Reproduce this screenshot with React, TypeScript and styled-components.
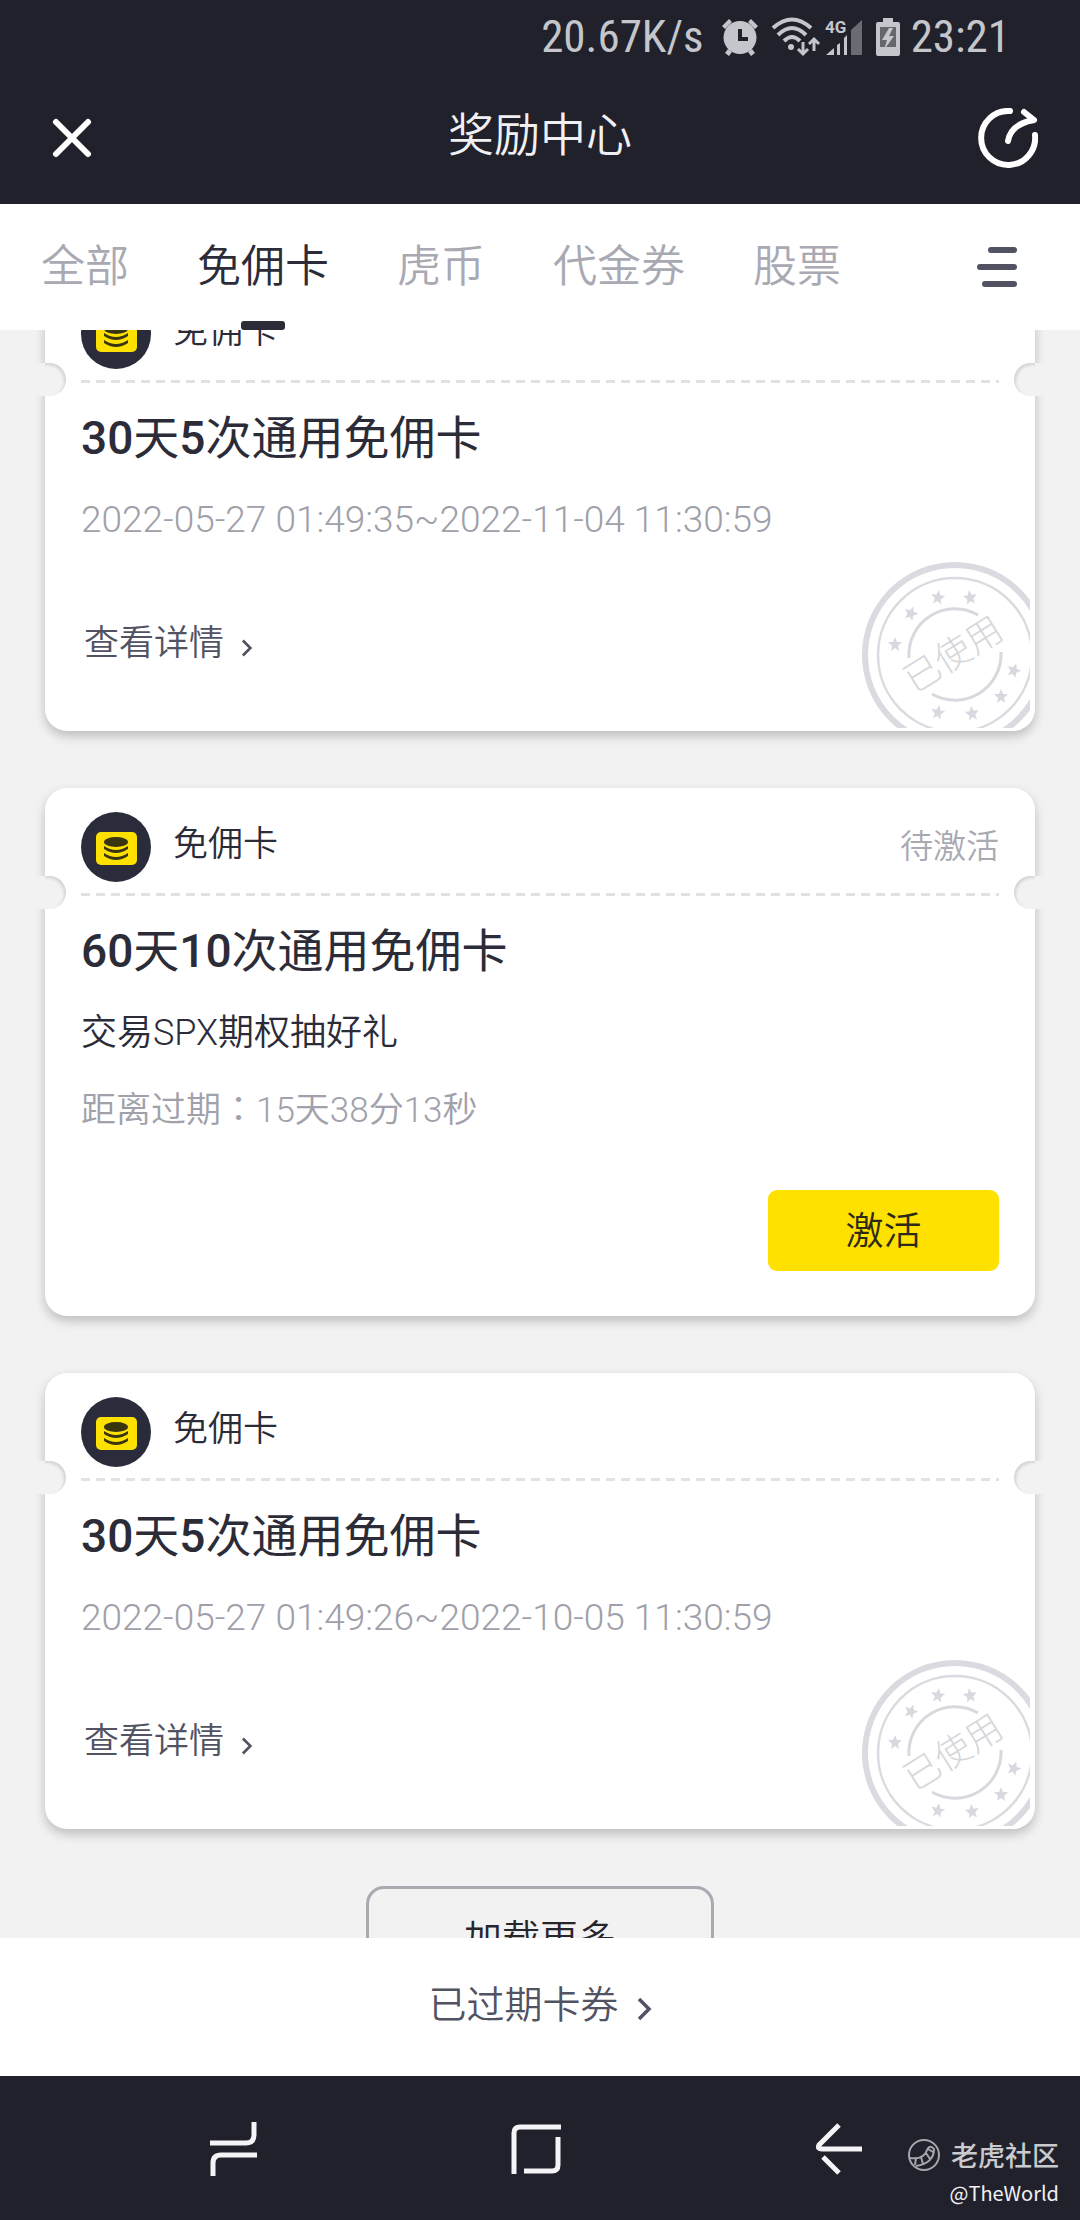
import React, { useLayoutEffect, useRef, useState } from "react";
import styled, { createGlobalStyle } from "styled-components";

const ink = "#2b2c38";
const slate = "#515262";
const muted = "#a8a9b2";
const bar = "#21212b";
const cjk = `Roboto, "Noto Sans CJK SC", sans-serif`;

const GlobalStyle = createGlobalStyle`
  *, *::before, *::after { box-sizing: border-box; }
  body { margin: 0; background: #f2f2f2; font-family: ${cjk}; font-weight: 350; color: ${ink}; }
  button { margin: 0; padding: 0; border: 0; background: none; font: inherit; color: inherit; cursor: pointer; }
  a { color: inherit; text-decoration: none; }
  h1, h2, p { margin: 0; font-weight: inherit; }
  svg { display: block; flex: none; }
`;

const Screen = styled.div`
  display: flex;
  flex-direction: column;
  height: 100vh;
  overflow: hidden;
`;

const StatusBar = styled.div`
  display: flex;
  flex: none;
  align-items: center;
  justify-content: flex-end;
  height: 72px;
  padding: 2px 70px 0 40px;
  background: ${bar};
  color: #c5c6cb;
  font-family: "Roboto Condensed", "Liberation Sans Narrow", Roboto, sans-serif;
  font-size: 45px;
  font-weight: 400;
  line-height: 70px;
`;

const StatusIcons = styled.div`
  display: flex;
  align-items: center;
  gap: 12px;
  padding: 0 10px 0 17px;
`;

const NetworkIcons = styled.div`
  display: flex;
  align-items: center;
  gap: 4px;
`;

const Header = styled.header`
  display: grid;
  flex: none;
  grid-template-columns: 60px 1fr 60px;
  align-items: center;
  height: 132px;
  padding: 0 42px;
  background: ${bar};
  color: #fff;
`;

const Title = styled.h1`
  padding-bottom: 6px;
  color: #f0f0f4;
  font-size: 46px;
  line-height: 64px;
  text-align: center;
`;

const IconButton = styled.button`
  display: flex;
  align-items: center;
  justify-content: center;
  height: 60px;
`;

const TabBar = styled.nav`
  display: flex;
  flex: none;
  align-items: stretch;
  justify-content: space-between;
  height: 126px;
  padding: 0 62px 0 41px;
  background: #fff;
`;

const TabList = styled.div`
  display: flex;
  gap: 68px;
`;

const Tab = styled.button<{ $active: boolean }>`
  position: relative;
  color: ${(p) => (p.$active ? ink : muted)};
  font-size: 44px;
  line-height: 64px;
  white-space: nowrap;

  &::after {
    content: "";
    position: absolute;
    bottom: 0;
    left: calc(50% - 22px);
    width: 44px;
    height: 9px;
    border-radius: 3px;
    background: ${(p) => (p.$active ? ink : "transparent")};
  }
`;

const List = styled.main`
  flex: 1;
  min-height: 0;
  overflow-y: auto;
  scrollbar-width: none;
`;

const ListInner = styled.div`
  display: flex;
  flex-direction: column;
  gap: 57px;
  padding: 40px 45px 60px;
`;

const Card = styled.article`
  position: relative;
  flex: none;
  border-radius: 22px;
  background: #fff;
  box-shadow: 0 5px 11px rgba(0, 0, 0, 0.22);
`;

const Notch = styled.span<{ $side: "left" | "right" }>`
  position: absolute;
  top: 88px;
  ${(p) => p.$side}: -12px;
  width: 33px;
  height: 33px;
  border-radius: ${(p) => (p.$side === "left" ? "0 17px 17px 0" : "17px 0 0 17px")};
  background: #f2f2f2;

  &::after {
    content: "";
    position: absolute;
    inset: 0;
    border-radius: inherit;
    box-shadow: inset ${(p) => (p.$side === "left" ? "-2px" : "2px")} 2px 3px rgba(0, 0, 0, 0.12);
    clip-path: ${(p) => (p.$side === "left" ? "inset(0 0 0 12px)" : "inset(0 12px 0 0)")};
  }
`;

const CardHead = styled.div`
  display: flex;
  align-items: center;
  gap: 22px;
  padding: 24px 36px 11px;
`;

const Kind = styled.span`
  flex: 1;
  padding-bottom: 4px;
  font-size: 35px;
  line-height: 56px;
`;

const Status = styled.span`
  color: ${muted};
  font-size: 33px;
  line-height: 56px;
`;

const Perforation = styled.div`
  height: 3px;
  margin: 0 36px;
  background: repeating-linear-gradient(90deg, #e2e2e4 0 9px, transparent 9px 15px);
`;

const CardBody = styled.div`
  display: flex;
  flex-direction: column;
  gap: 22px;
  padding: 23px 36px 0;
`;

const CardTitle = styled.h2`
  font-size: 46px;
  font-weight: 400;
  line-height: 64px;
`;

const Figure = styled.span`
  font-weight: 500;
`;

const Line = styled.p`
  font-size: 36px;
  line-height: 56px;
`;

const Range = styled(Line)`
  color: #9fa0a9;
  font-size: 37px;
  font-weight: 300;
`;

const Expiry = styled(Line)`
  color: #a0a1aa;
  font-size: 35px;
`;

const CentredColon = styled.span`
  font-family: "Noto Sans CJK TC", sans-serif;
  line-height: 1;
`;

const DetailRow = styled.div`
  padding: 68px 39px 59px;
`;

const DetailLink = styled.a`
  display: flex;
  align-items: center;
  gap: 17px;
  width: fit-content;
  color: ${slate};
  font-size: 35px;
  line-height: 56px;
`;

const ActionRow = styled.div`
  display: flex;
  justify-content: flex-end;
  padding: 51px 36px 45px;
`;

const Activate = styled.button`
  width: 231px;
  height: 81px;
  padding-bottom: 6px;
  border-radius: 9px;
  background: #ffe100;
  color: #2e2a18;
  font-size: 38px;
`;

const StampBox = styled.div`
  position: absolute;
  right: 5px;
  bottom: 3px;
`;

const StampText = styled.text`
  fill: #d6d7db;
  font-family: "Noto Sans CJK SC", sans-serif;
  font-size: 36px;
  font-weight: 300;
`;

const LoadMore = styled.button`
  align-self: center;
  width: 348px;
  height: 104px;
  padding-bottom: 6px;
  border: 3px solid #a9a9b2;
  border-radius: 18px;
  color: #26262c;
  font-size: 38px;
`;

const Footer = styled.footer`
  display: flex;
  flex: none;
  align-items: center;
  justify-content: center;
  height: 138px;
  padding-bottom: 4px;
  background: #fff;
`;

const ExpiredLink = styled.a`
  display: flex;
  align-items: center;
  gap: 18px;
  color: ${slate};
  font-size: 38px;
  line-height: 60px;
`;

const ChevronSvg = styled.svg`
  margin-top: 8px;
`;

const SystemNav = styled.nav`
  position: relative;
  display: grid;
  flex: none;
  grid-template-columns: repeat(3, 1fr);
  align-items: center;
  height: 144px;
  padding: 2px 90px 0 83px;
  background: ${bar};
`;

const Watermark = styled.div`
  position: absolute;
  right: 21px;
  bottom: 9px;
  display: flex;
  flex-direction: column;
  align-items: flex-end;
  font-family: "Noto Sans CJK SC", sans-serif;
`;

const Brand = styled.div`
  display: flex;
  align-items: center;
  gap: 10px;
  color: #c9c9ce;
  font-size: 27px;
  font-weight: 500;
  line-height: 40px;
`;

const Author = styled.div`
  color: #f0f0f2;
  font-size: 20px;
  font-weight: 400;
  line-height: 36px;
`;

const AlarmIcon = () => (
  <svg width="38" height="38" viewBox="0 0 38 38" fill="currentColor" aria-hidden="true">
    <path d="M1 8 8 1l3 3-7 7zM37 8l-7-7-3 3 7 7z" />
    <path d="M7 31l4 3-3 4-4-3zM31 31l-4 3 3 4 4-3z" />
    <path fillRule="evenodd" d="M19 3a16.500 16.500 0 1 0 0 33 16.500 16.500 0 0 0 0-33zm-2 8h4v8h6v4H17z" />
  </svg>
);

const WifiIcon = () => (
  <svg width="50" height="40" viewBox="0 0 50 40" fill="none" stroke="currentColor" aria-hidden="true">
    <g strokeWidth="4">
      <path d="M2 11Q21-6 40 11" />
      <path d="M7 18Q21 4 35 18" />
      <path d="M13 24Q21 16 29 24" />
    </g>
    <circle cx="20" cy="30" r="3" fill="currentColor" stroke="none" />
    <path strokeWidth="3" d="M32 25v12M27 32l5 5 5-5M43 34V22M38 27l5-5 5 5" />
  </svg>
);

const SignalIcon = () => (
  <svg width="38" height="38" viewBox="0 0 38 38" fill="currentColor" aria-hidden="true">
    <path opacity=".45" d="M26 37V12L37 2v35z" />
    <path d="M1 37l8-7v7zM12 37v-10l3-2v12zM19 37V20l3-3v20z" />
    <text x="0" y="15" fontFamily="Roboto, sans-serif" fontSize="17" fontWeight="700">4G</text>
  </svg>
);

const BatteryIcon = () => (
  <svg width="26" height="40" viewBox="0 0 26 40" aria-hidden="true">
    <path fill="currentColor" d="M8 1h10v4h5q2 0 2 2v30q0 2-2 2H3q-2 0-2-2V7q0-2 2-2h5z" />
    <path fill="#66666d" d="M5 10h16v20H5z" />
    <path fill="currentColor" d="M14 11 7 23h5L9 33l10-14h-5l4-8z" />
  </svg>
);

const CloseIcon = () => (
  <svg width="44" height="44" viewBox="0 0 44 44" fill="none" stroke="#fff" strokeWidth="6" strokeLinecap="round" aria-hidden="true">
    <path d="M6 6l32 32M38 6 6 38" />
  </svg>
);

const ShareIcon = () => (
  <svg width="60" height="60" viewBox="0 0 60 60" fill="none" stroke="#fff" strokeWidth="6" strokeLinecap="round" strokeLinejoin="round" aria-hidden="true">
    <path d="M32 3A27 27 0 1 0 57 27" />
    <path d="M30 33Q33 16 56 12M46 4l10 8" />
  </svg>
);

const FilterIcon = () => (
  <svg width="42" height="42" viewBox="0 0 42 42" stroke={slate} strokeWidth="6" strokeLinecap="round" aria-hidden="true">
    <path d="M15 4h23M4 21h34M9 38h29" />
  </svg>
);

const CoinIcon = () => (
  <svg width="70" height="70" viewBox="0 0 70 70" aria-hidden="true">
    <circle cx="35" cy="35" r="35" fill="#2b2c3b" />
    <rect x="15" y="20" width="41" height="33" rx="5" fill="#ffe100" />
    <ellipse cx="35" cy="30" rx="12" ry="5" fill="#38350f" />
    <path d="M23 34q12 8 24 0v3q-12 8-24 0zM23 41q12 8 24 0v3q-12 8-24 0z" fill="#38350f" />
  </svg>
);

const Chevron = ({ size }: { size: number }) => (
  <ChevronSvg width={size / 2 + 3} height={size} viewBox="0 0 15 24" fill="none" stroke="currentColor" strokeWidth="3.500" aria-hidden="true">
    <path d="M2 2l10 10L2 22" />
  </ChevronSvg>
);

const starSpots = [
  [76, 35, 8],
  [108, 35, -8],
  [49, 51, 20],
  [33, 82, 0],
  [152, 108, 20],
  [139, 134, 0],
  [76, 150, 10],
  [110, 151, -8],
];

const Stamp = () => (
  <svg width="168" height="166" viewBox="0 0 168 166" fill="none" stroke="#dadae0" aria-label="已使用">
    <circle cx="93" cy="93" r="90" strokeWidth="6" />
    <circle cx="93" cy="93" r="77" strokeWidth="2.500" />
    <g stroke="#d8d9de" strokeWidth="3">
      <path d="M47 96A46 46 0 0 1 116 53" />
      <path d="M139 90A46 46 0 0 1 70 132" />
    </g>
    <g fill="#d8d9e0" stroke="none">
      {starSpots.map(([x, y, turn]) => (
        <path
          key={`${x}-${y}`}
          transform={`translate(${x} ${y}) rotate(${turn})`}
          d="M0-7 2-2 7-2 3 2 4 7 0 4-4 7-3 2-7-2-2-2z"
        />
      ))}
    </g>
    <g stroke="none" transform="translate(91 92) rotate(-32)">
      <StampText x="0" y="13" textAnchor="middle">已使用</StampText>
    </g>
  </svg>
);

const RecentsIcon = () => (
  <svg width="48" height="54" viewBox="0 0 48 54" fill="none" stroke="#f4f4f7" strokeWidth="5" aria-hidden="true">
    <path d="M44 0v13q0 8-8 8H0M3 54V41q0-8 8-8h36" />
  </svg>
);

const HomeIcon = () => (
  <svg width="50" height="50" viewBox="0 0 50 50" fill="none" stroke="#f4f4f7" strokeWidth="5" aria-hidden="true">
    <path d="M3 50V9q0-6 6-6h41M47 13v28q0 6-6 6H13" />
  </svg>
);

const BackIcon = () => (
  <svg width="48" height="54" viewBox="0 0 48 54" fill="none" stroke="#f4f4f7" strokeWidth="5" aria-hidden="true">
    <path d="M24 3 4 23q-2 4 3 4h40M8 35l16 16" />
  </svg>
);

const TigerMark = () => (
  <svg width="33" height="33" viewBox="0 0 33 33" fill="none" stroke="#a5a5ad" strokeWidth="2" aria-hidden="true">
    <circle cx="16" cy="16" r="15" />
    <path d="M2 19q14 2 17-8 3-6 7-1 0 14-18 17M8 19l-1 7M13 18l2 7M18 14l4 6M20 10l5 3" />
  </svg>
);

const tabs = ["全部", "免佣卡", "虎币", "代金券", "股票"];

type Coupon = {
  id: number;
  title: string;
  range?: string;
  note?: string;
  timeLeft?: string;
  status?: string;
};

const coupons: Coupon[] = [
  { id: 1, title: "30天5次通用免佣卡", range: "2022-05-27 01:49:35~2022-11-04 11:30:59" },
  {
    id: 2,
    title: "60天10次通用免佣卡",
    note: "交易SPX期权抽好礼",
    timeLeft: "15天38分13秒",
    status: "待激活",
  },
  { id: 3, title: "30天5次通用免佣卡", range: "2022-05-27 01:49:26~2022-10-05 11:30:59" },
];

// Digits in a coupon title are set one step heavier than the characters.
const titleParts = (title: string) =>
  title.split(/(\d+)/).map((part, i) => (i % 2 ? <Figure key={i}>{part}</Figure> : part));

const CouponCard = ({ coupon }: { coupon: Coupon }) => (
  <Card>
    <Notch $side="left" />
    <Notch $side="right" />
    <CardHead>
      <CoinIcon />
      <Kind>免佣卡</Kind>
      {coupon.status && <Status>{coupon.status}</Status>}
    </CardHead>
    <Perforation />
    <CardBody>
      <CardTitle>{titleParts(coupon.title)}</CardTitle>
      {coupon.range && <Range>{coupon.range}</Range>}
      {coupon.note && <Line>{coupon.note}</Line>}
      {coupon.timeLeft && (
        <Expiry>
          距离过期<CentredColon>：</CentredColon>
          {coupon.timeLeft}
        </Expiry>
      )}
    </CardBody>
    {coupon.status ? (
      <ActionRow>
        <Activate type="button">激活</Activate>
      </ActionRow>
    ) : (
      <>
        <DetailRow>
          <DetailLink href="#detail">
            查看详情
            <Chevron size={18} />
          </DetailLink>
        </DetailRow>
        <StampBox>
          <Stamp />
        </StampBox>
      </>
    )}
  </Card>
);

export default function App() {
  const [active, setActive] = useState("免佣卡");
  const listRef = useRef<HTMLElement>(null);

  // The list opens part-way down, with the first card's head under the tabs.
  useLayoutEffect(() => {
    if (listRef.current) listRef.current.scrollTop = 95;
  }, []);

  return (
    <Screen>
      <GlobalStyle />
      <StatusBar>
        <span>20.67K/s</span>
        <StatusIcons>
          <AlarmIcon />
          <NetworkIcons>
            <WifiIcon />
            <SignalIcon />
          </NetworkIcons>
          <BatteryIcon />
        </StatusIcons>
        <span>23:21</span>
      </StatusBar>
      <Header>
        <IconButton type="button" aria-label="关闭">
          <CloseIcon />
        </IconButton>
        <Title>奖励中心</Title>
        <IconButton type="button" aria-label="分享">
          <ShareIcon />
        </IconButton>
      </Header>
      <TabBar>
        <TabList role="tablist">
          {tabs.map((name) => (
            <Tab
              key={name}
              type="button"
              role="tab"
              aria-selected={name === active}
              $active={name === active}
              onClick={() => setActive(name)}
            >
              {name}
            </Tab>
          ))}
        </TabList>
        <button type="button" aria-label="筛选">
          <FilterIcon />
        </button>
      </TabBar>
      <List ref={listRef}>
        <ListInner>
          {coupons.map((coupon) => (
            <CouponCard key={coupon.id} coupon={coupon} />
          ))}
          <LoadMore type="button">加载更多</LoadMore>
        </ListInner>
      </List>
      <Footer>
        <ExpiredLink href="#expired">
          已过期卡券
          <Chevron size={24} />
        </ExpiredLink>
      </Footer>
      <SystemNav>
        <IconButton type="button" aria-label="最近任务">
          <RecentsIcon />
        </IconButton>
        <IconButton type="button" aria-label="主屏幕">
          <HomeIcon />
        </IconButton>
        <IconButton type="button" aria-label="返回">
          <BackIcon />
        </IconButton>
        <Watermark>
          <Brand>
            <TigerMark />
            老虎社区
          </Brand>
          <Author>@TheWorld</Author>
        </Watermark>
      </SystemNav>
    </Screen>
  );
}
